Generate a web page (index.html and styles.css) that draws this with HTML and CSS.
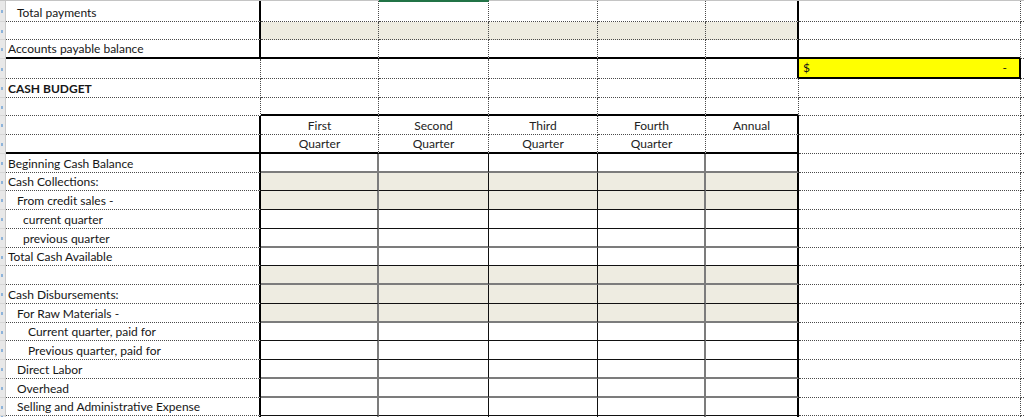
FILE: index.html
```html
<!DOCTYPE html>
<html lang="en">
<head>
<meta charset="utf-8">
<title>Cash Budget</title>
<link rel="stylesheet" href="styles.css">
</head>
<body>
<table class="sheet">
  <colgroup>
    <col class="w-g"><col class="w-a"><col class="w-b"><col class="w-c"><col class="w-d"><col class="w-e"><col class="w-f"><col class="w-x"><col class="w-h">
  </colgroup>
  <tbody>
    <tr class="colhead"><td></td><td></td><td></td><td class="sel"></td><td></td><td></td><td></td><td></td><td></td></tr>

    <tr class="h21"><td class="rh"></td><td class="lbl ind1 tk-r">Total payments</td><td></td><td class="sel-top"></td><td></td><td></td><td class="tk-r"></td><td></td><td class="edge"></td></tr>
    <tr class="h18"><td class="rh"></td><td class="lbl tk-r"></td><td class="beige"></td><td class="beige"></td><td class="beige"></td><td class="beige"></td><td class="beige tk-r"></td><td></td><td class="edge"></td></tr>
    <tr class="h19 tk-row"><td class="rh"></td><td class="lbl tk-r">Accounts payable balance</td><td></td><td></td><td></td><td></td><td class="tk-r"></td><td></td><td class="edge"></td></tr>
    <tr class="h20"><td class="rh"></td><td class="lbl"></td><td></td><td></td><td></td><td></td><td class="tk-r"></td><td class="total"><div class="acct"><span>$</span><span>-</span></div></td><td class="edge"></td></tr>
    <tr class="h19"><td class="rh"></td><td class="lbl bold">CASH BUDGET</td><td></td><td></td><td></td><td></td><td></td><td></td><td class="edge"></td></tr>
    <tr class="h18 head-top"><td class="rh"></td><td class="lbl"></td><td class="q"></td><td class="q"></td><td class="q"></td><td class="q"></td><td class="q"></td><td></td><td class="edge"></td></tr>

    <tr class="h19"><td class="rh"></td><td class="lbl tk-r"></td><td class="hd">First</td><td class="hd">Second</td><td class="hd">Third</td><td class="hd">Fourth</td><td class="hd tk-r">Annual</td><td></td><td class="edge"></td></tr>
    <tr class="h19 head-bot"><td class="rh"></td><td class="lbl tk-r"></td><td class="hd">Quarter</td><td class="hd">Quarter</td><td class="hd">Quarter</td><td class="hd">Quarter</td><td class="hd tk-r"></td><td></td><td class="edge"></td></tr>

    <tr class="h19 body rule-grey"><td class="rh"></td><td class="lbl tk-r">Beginning Cash Balance</td><td class="q c1"></td><td class="q c2"></td><td class="q c3"></td><td class="q c4"></td><td class="q c5"></td><td></td><td class="edge"></td></tr>
    <tr class="h18 body rule-black fill"><td class="rh"></td><td class="lbl tk-r">Cash Collections:</td><td class="q c1"></td><td class="q c2"></td><td class="q c3"></td><td class="q c4"></td><td class="q c5"></td><td></td><td class="edge"></td></tr>
    <tr class="h19 body rule-black fill"><td class="rh"></td><td class="lbl ind1 tk-r">From credit sales -</td><td class="q c1"></td><td class="q c2"></td><td class="q c3"></td><td class="q c4"></td><td class="q c5"></td><td></td><td class="edge"></td></tr>
    <tr class="h19 body rule-black"><td class="rh"></td><td class="lbl ind2 tk-r">current quarter</td><td class="q c1"></td><td class="q c2"></td><td class="q c3"></td><td class="q c4"></td><td class="q c5"></td><td></td><td class="edge"></td></tr>
    <tr class="h19 body rule-grey"><td class="rh"></td><td class="lbl ind2 tk-r">previous quarter</td><td class="q c1"></td><td class="q c2"></td><td class="q c3"></td><td class="q c4"></td><td class="q c5"></td><td></td><td class="edge"></td></tr>
    <tr class="h18 body rule-black"><td class="rh"></td><td class="lbl tk-r">Total Cash Available</td><td class="q c1"></td><td class="q c2"></td><td class="q c3"></td><td class="q c4"></td><td class="q c5"></td><td></td><td class="edge"></td></tr>
    <tr class="h19 body rule-grey fill"><td class="rh"></td><td class="lbl tk-r"></td><td class="q c1"></td><td class="q c2"></td><td class="q c3"></td><td class="q c4"></td><td class="q c5"></td><td></td><td class="edge"></td></tr>
    <tr class="h19 body rule-black fill"><td class="rh"></td><td class="lbl tk-r">Cash Disbursements:</td><td class="q c1"></td><td class="q c2"></td><td class="q c3"></td><td class="q c4"></td><td class="q c5"></td><td></td><td class="edge"></td></tr>
    <tr class="h19 body rule-grey fill"><td class="rh"></td><td class="lbl ind1 tk-r">For Raw Materials -</td><td class="q c1"></td><td class="q c2"></td><td class="q c3"></td><td class="q c4"></td><td class="q c5"></td><td></td><td class="edge"></td></tr>
    <tr class="h18 body rule-black"><td class="rh"></td><td class="lbl ind3 tk-r">Current quarter, paid for</td><td class="q c1"></td><td class="q c2"></td><td class="q c3"></td><td class="q c4"></td><td class="q c5"></td><td></td><td class="edge"></td></tr>
    <tr class="h19 body rule-black"><td class="rh"></td><td class="lbl ind3 tk-r">Previous quarter, paid for</td><td class="q c1"></td><td class="q c2"></td><td class="q c3"></td><td class="q c4"></td><td class="q c5"></td><td></td><td class="edge"></td></tr>
    <tr class="h19 body rule-grey"><td class="rh"></td><td class="lbl ind1 tk-r">Direct Labor</td><td class="q c1"></td><td class="q c2"></td><td class="q c3"></td><td class="q c4"></td><td class="q c5"></td><td></td><td class="edge"></td></tr>
    <tr class="h19 body rule-grey"><td class="rh"></td><td class="lbl ind1 tk-r">Overhead</td><td class="q c1"></td><td class="q c2"></td><td class="q c3"></td><td class="q c4"></td><td class="q c5"></td><td></td><td class="edge"></td></tr>
    <tr class="h18 body rule-black"><td class="rh"></td><td class="lbl ind1 tk-r">Selling and Administrative Expense</td><td class="q c1"></td><td class="q c2"></td><td class="q c3"></td><td class="q c4"></td><td class="q c5"></td><td></td><td class="edge"></td></tr>
    <tr class="tail"><td class="rh"></td><td class="lbl tk-r"></td><td class="q c1"></td><td class="q c2"></td><td class="q c3"></td><td class="q c4"></td><td class="q c5"></td><td></td><td class="edge"></td></tr>
  </tbody>
</table>
</body>
</html>
```

FILE: styles.css
```css
* {
  box-sizing: border-box;
}

html,
body {
  margin: 0;
  padding: 0;
  background: #ffffff;
}

body {
  font-family: Lato, "Open Sans", "Liberation Sans", sans-serif;
  font-size: 12px;
  color: #161616;
  overflow: hidden;
}

.sheet {
  border-collapse: separate;
  border-spacing: 0;
  table-layout: fixed;
  width: 1024px;
}

.w-g { width: 6px; }
.w-a { width: 255px; }
.w-b { width: 118px; }
.w-c { width: 110px; }
.w-d { width: 109px; }
.w-e { width: 108px; }
.w-f { width: 93px; }
.w-x { width: 222px; }
.w-h { width: 3px; }

.sheet td {
  padding: 0;
  border-right: 1px dotted #4a4a4a;
  border-bottom: 1px dotted #4a4a4a;
  vertical-align: bottom;
  white-space: nowrap;
  overflow: hidden;
  line-height: 14px;
}

/* row heights */
.h18 { height: 18px; }
.h19 { height: 19px; }
.h20 { height: 20px; }
.h21 { height: 21px; }
.tail { height: 2px; }
.sheet .tail td { line-height: 0; font-size: 0; border-bottom: none; }

/* column header strip at top */
.colhead { height: 1px; }
.sheet .colhead td {
  height: 1px;
  line-height: 0;
  font-size: 0;
  border: none;
  background: #c4c4c4;
}
.sheet .sel-top {
  border-top: 1px solid #217346;
}
.sheet .colhead .sel {
  background: #217346;
}

/* row header gutter */
.sheet .rh {
  border-right: 1px solid #c9c9c9;
  border-bottom: 1px solid #d6d6d6;
  background: linear-gradient(#8db3da, #8db3da) 1px 55% / 2px 3px no-repeat, #e8e8e8;
}

/* right gutter past column G */
.sheet .edge {
  border-right: none;
}

/* labels in column A */
.sheet .lbl { padding-left: 2px; padding-bottom: 1px; }
.sheet .ind1 { padding-left: 11px; }
.sheet .ind2 { padding-left: 17px; }
.sheet .ind3 { padding-left: 22px; }
.bold { font-weight: 700; }

/* borders */
.sheet .tk-r { border-right: 2px solid #000; }
.sheet .tk-row td:not(.rh):not(.edge) { border-bottom: 2px solid #000; }
.sheet .head-top .q { border-bottom: 2px solid #000; }
.sheet .head-bot td:not(.rh):not(.edge):not(:nth-child(8)) { border-bottom: 2px solid #000; }

.beige { background: #eeece1; }
.fill .q { background: #eeece1; }

/* header titles */
.sheet .hd {
  text-align: center;
  color: #222;
  padding-bottom: 1px;
}

/* body grid of the budget */
.sheet .body .c1 { border-right: 2px solid #7c7c7c; }
.sheet .body .c2 { border-right: 1px solid #111; }
.sheet .body .c3 { border-right: 1px solid #111; }
.sheet .body .c4 { border-right: 2px solid #7c7c7c; }
.sheet .body .c5 { border-right: 2px solid #000; }
.sheet .tail .c1 { border-right: 2px solid #7c7c7c; }
.sheet .tail .c2,
.sheet .tail .c3 { border-right: 1px solid #111; }
.sheet .tail .c4 { border-right: 2px solid #7c7c7c; }
.sheet .tail .c5 { border-right: 2px solid #000; }

.sheet .rule-grey .q { border-bottom: 2px solid #7c7c7c; }
.sheet .rule-black .q { border-bottom: 1px solid #111; }

/* yellow total cell */
.sheet .total {
  background: #ffff00;
  border-right: 2px solid #000;
  border-bottom: 2px solid #000;
}
.acct {
  display: flex;
  justify-content: space-between;
  padding: 0 12px 2px 4px;
}
```
